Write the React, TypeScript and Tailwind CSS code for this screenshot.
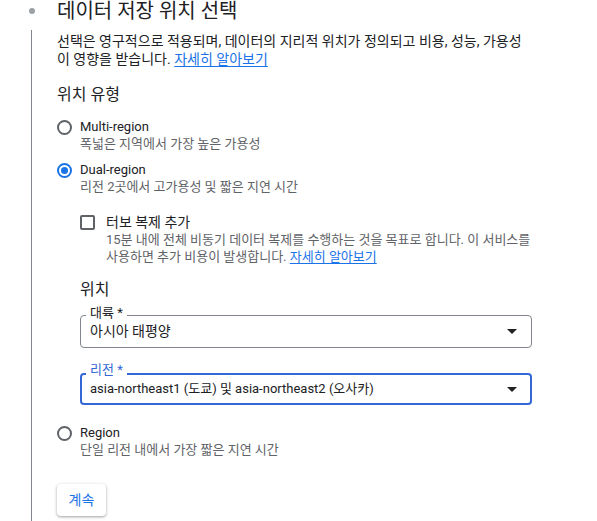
import React from "react";

const font = { fontFamily: 'Roboto, "Noto Sans CJK KR", sans-serif' };

function Radio({ checked }: { checked?: boolean }) {
  return checked ? (
    <div className="w-[15px] h-[15px] rounded-full border-2 border-[#1a73e8] flex items-center justify-center shrink-0">
      <div className="w-[7px] h-[7px] rounded-full bg-[#1a73e8]" />
    </div>
  ) : (
    <div className="w-[15px] h-[15px] rounded-full border-2 border-[#5f6368] shrink-0" />
  );
}

function Arrow() {
  return (
    <svg width="10" height="5" viewBox="0 0 10 5" className="shrink-0">
      <path d="M0 0 L10 0 L5 5 Z" fill="#202124" />
    </svg>
  );
}

export default function App() {
  return (
    <div className="w-[597px] h-[521px] overflow-hidden bg-white text-[#202124]" style={font}>
      <div className="flex items-center h-[22px]">
        <div className="ml-[29px] w-[6px] h-[6px] rounded-full bg-[#9aa0a6]" />
        <div className="ml-[22px] text-[20px] leading-[22px] text-[#202124]">데이터 저장 위치 선택</div>
      </div>
      <div className="mt-[8px] ml-[31px] border-l border-[#80868b] pl-[25px] pt-[2px] h-[500px]">
        <div className="text-[14px] leading-[18px] w-[472px] text-[#202124]">
          선택은 영구적으로 적용되며, 데이터의 지리적 위치가 정의되고 비용, 성능, 가용성이 영향을 받습니다.{" "}
          <span className="text-[#1a73e8] underline underline-offset-2">자세히 알아보기</span>
        </div>
        <div className="mt-[15px] text-[16px] leading-[24px]">위치 유형</div>

        <div className="mt-[11px] flex">
          <div className="pt-[2px]"><Radio /></div>
          <div className="ml-[8px]">
            <div className="text-[13px] leading-[18px]">Multi-region</div>
            <div className="text-[13px] leading-[16px] text-[#5f6368]">폭넓은 지역에서 가장 높은 가용성</div>
          </div>
        </div>

        <div className="mt-[9px] flex">
          <div className="pt-[2px]"><Radio checked /></div>
          <div className="ml-[8px]">
            <div className="text-[13px] leading-[18px]">Dual-region</div>
            <div className="text-[13px] leading-[16px] text-[#5f6368]">리전 2곳에서 고가용성 및 짧은 지연 시간</div>
          </div>
        </div>

        <div className="pl-[23px]">
          <div className="mt-[18px] flex">
            <div className="pt-[2px]">
              <div className="w-[15px] h-[15px] rounded-[2px] border-2 border-[#5f6368]" />
            </div>
            <div className="ml-[11px]">
              <div className="text-[14px] leading-[18px]">터보 복제 추가</div>
              <div className="text-[13px] leading-[17px] text-[#5f6368] w-[426px]">
                15분 내에 전체 비동기 데이터 복제를 수행하는 것을 목표로 합니다. 이 서비스를 사용하면 추가 비용이 발생합니다.{" "}
                <span className="text-[#1a73e8] underline underline-offset-2">자세히 알아보기</span>
              </div>
            </div>
          </div>

          <div className="mt-[13px] text-[16px] leading-[24px]">위치</div>

          <div className="mt-[13px] relative w-[452px] h-[33px] border border-[#80868b] rounded-[4px] flex items-center pl-[9px] pr-[14px]">
            <div className="absolute left-[5px] -top-[10px] px-[4px] bg-white text-[13px] leading-[14px] text-[#202124]">대륙 *</div>
            <div className="flex-1 text-[14px]">아시아 태평양</div>
            <Arrow />
          </div>

          <div className="mt-[25px] relative w-[452px] h-[32px] border-2 border-[#3367d6] rounded-[4px] flex items-center pl-[8px] pr-[13px]">
            <div className="absolute left-[4px] -top-[12px] px-[4px] bg-white text-[13px] leading-[14px] text-[#3367d6]">리전 *</div>
            <div className="flex-1 text-[13px]">asia-northeast1 (도쿄) 및 asia-northeast2 (오사카)</div>
            <Arrow />
          </div>
        </div>

        <div className="mt-[19px] flex">
          <div className="pt-[2px]"><Radio /></div>
          <div className="ml-[8px]">
            <div className="text-[13px] leading-[18px]">Region</div>
            <div className="text-[13px] leading-[16px] text-[#5f6368]">단일 리전 내에서 가장 짧은 지연 시간</div>
          </div>
        </div>

        <button className="mt-[26px] w-[49px] h-[32px] rounded-[4px] bg-white text-[#1a73e8] text-[14px] shadow-[0_1px_2px_rgba(60,64,67,0.3),0_1px_3px_1px_rgba(60,64,67,0.15)]">
          계속
        </button>
      </div>
    </div>
  );
}
